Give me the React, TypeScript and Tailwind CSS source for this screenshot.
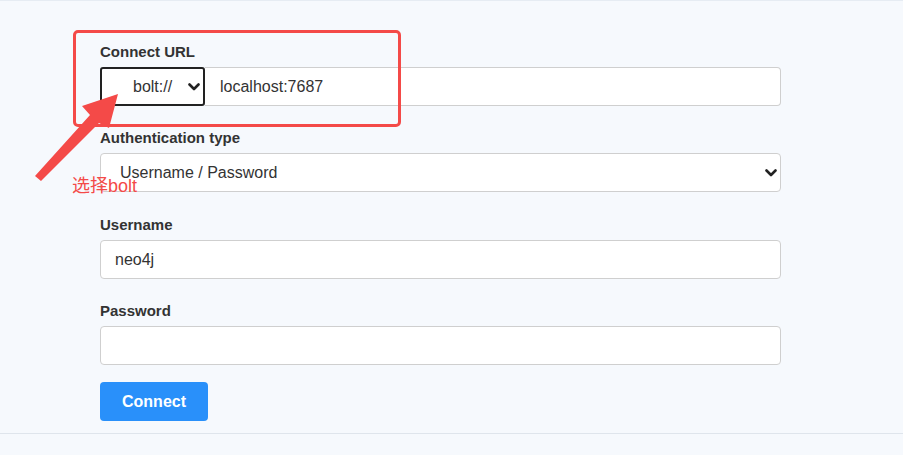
const font = { fontFamily: '"Liberation Sans", Arial, "Noto Sans CJK SC", sans-serif' };

function Label({ children }: { children: React.ReactNode }) {
  return (
    <label className="mb-[6px] block h-5 text-[15px] font-bold leading-[22px] text-[#333]">
      {children}
    </label>
  );
}

function Chevron() {
  return (
    <svg width="12" height="8" viewBox="0 0 12 8" className="shrink-0">
      <path d="M1.5 1.5 L6 6 L10.5 1.5" fill="none" stroke="#222" strokeWidth="2.6" strokeLinecap="round" strokeLinejoin="round" />
    </svg>
  );
}

function Annotation() {
  return (
    <>
      <div className="pointer-events-none absolute left-[73px] top-[30px] h-[97px] w-[328px] rounded-[5px] border-[3px] border-[#f44a48]" />
      <svg className="pointer-events-none absolute left-0 top-0" width="140" height="200" viewBox="0 0 140 200">
        <polygon
          points="35,176 90,115 82,106 118,94 109,128 99,123 41,181"
          fill="#f44a48"
          strokeLinejoin="round"
        />
      </svg>
      <span className="absolute left-[72px] top-[176px] text-[18px] leading-[21px] text-[#f44a48]">选择bolt</span>
    </>
  );
}

export default function App() {
  return (
    <div className="relative h-[455px] w-full overflow-hidden bg-[#f6f9fd]" style={font}>
      <div className="border-t border-b border-t-[#e6ecf3] border-b-[#dfe5ec] pb-[12px] pl-[100px] pt-[40px]">
        <div className="w-[681px]">
          <div>
            <Label>Connect URL</Label>
            <div className="flex h-[39px]">
              <div className="flex w-[105px] items-center justify-between rounded-[3px] border-2 border-[#222] bg-white pl-[31px] pr-[3px] text-[16px] text-[#333]">
                <span>bolt://</span>
                <Chevron />
              </div>
              <div className="flex flex-1 items-center rounded-r-[4px] border border-l-0 border-[#cfcfcf] bg-white pl-[15px] text-[16px] text-[#333]">
                localhost:7687
              </div>
            </div>
          </div>

          <div className="mt-[21px]">
            <Label>Authentication type</Label>
            <div className="flex h-[39px] items-center justify-between rounded-[4px] border border-[#cfcfcf] bg-white pl-[19px] pr-[3px] text-[16px] text-[#333]">
              <span>Username / Password</span>
              <Chevron />
            </div>
          </div>

          <div className="mt-[22px]">
            <Label>Username</Label>
            <div className="flex h-[39px] items-center rounded-[4px] border border-[#cfcfcf] bg-white pl-[14px] text-[16px] text-[#333]">
              neo4j
            </div>
          </div>

          <div className="mt-[21px]">
            <Label>Password</Label>
            <div className="h-[39px] rounded-[4px] border border-[#cfcfcf] bg-white" />
          </div>

          <button className="mt-[17px] h-[39px] w-[108px] rounded-[4px] bg-[#2990fa] text-[16px] font-bold text-white">
            Connect
          </button>
        </div>
      </div>
      <Annotation />
    </div>
  );
}
